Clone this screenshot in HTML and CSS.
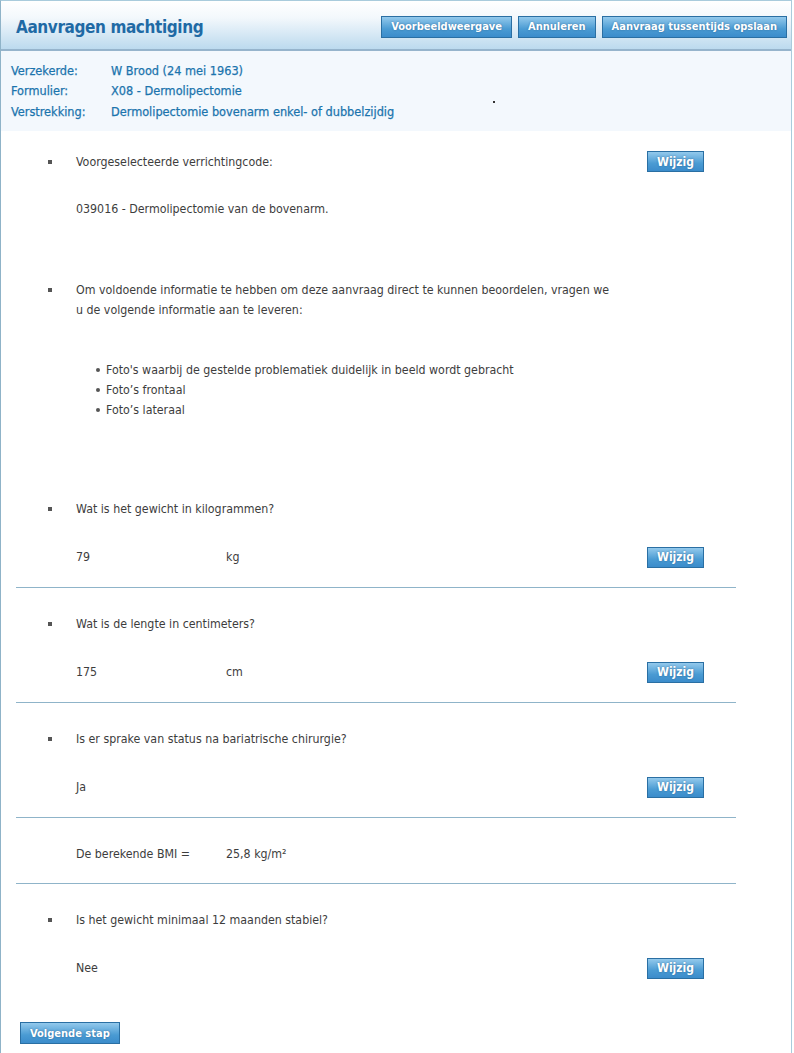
FILE: index.html
```html
<!DOCTYPE html>
<html lang="nl">
<head>
<meta charset="UTF-8">
<title>Aanvragen machtiging</title>
<link rel="stylesheet" href="styles.css">
</head>
<body>

<div class="page">

    <div class="header">
        <h1>Aanvragen machtiging</h1>
        <div class="actions">
            <button class="btn">Voorbeeldweergave</button>
            <button class="btn">Annuleren</button>
            <button class="btn">Aanvraag tussentijds opslaan</button>
        </div>
    </div>

    <div class="info">
        <div class="info-grid">
            <span>Verzekerde:</span><span>W Brood (24 mei 1963)</span>
            <span>Formulier:</span><span>X08 - Dermolipectomie</span>
            <span>Verstrekking:</span><span>Dermolipectomie bovenarm enkel- of dubbelzijdig</span>
        </div>
        <span class="dot"></span>
    </div>

    <div class="content">

        <div class="item first">
            <div class="row">
                <span class="sq"></span>
                <span class="text">Voorgeselecteerde verrichtingcode:</span>
                <button class="btn small">Wijzig</button>
            </div>
            <div class="answer">039016 - Dermolipectomie van de bovenarm.</div>
        </div>

        <div class="item note">
            <div class="row top">
                <span class="sq"></span>
                <span class="text">Om voldoende informatie te hebben om deze aanvraag direct te kunnen beoordelen, vragen we<br>u de volgende informatie aan te leveren:</span>
            </div>
            <ul class="bullets">
                <li>Foto's waarbij de gestelde problematiek duidelijk in beeld wordt gebracht</li>
                <li>Foto’s frontaal</li>
                <li>Foto’s lateraal</li>
            </ul>
        </div>

        <div class="item sep">
            <div class="row"><span class="sq"></span><span class="text">Wat is het gewicht in kilogrammen?</span></div>
            <div class="row answer-row">
                <span class="val">79</span><span class="unit">kg</span>
                <button class="btn small">Wijzig</button>
            </div>
        </div>

        <div class="item sep">
            <div class="row"><span class="sq"></span><span class="text">Wat is de lengte in centimeters?</span></div>
            <div class="row answer-row">
                <span class="val">175</span><span class="unit">cm</span>
                <button class="btn small">Wijzig</button>
            </div>
        </div>

        <div class="item sep">
            <div class="row"><span class="sq"></span><span class="text">Is er sprake van status na bariatrische chirurgie?</span></div>
            <div class="row answer-row">
                <span class="val">Ja</span>
                <button class="btn small">Wijzig</button>
            </div>
        </div>

        <div class="item sep bmi">
            <div class="row answer-row">
                <span class="val">De berekende BMI =</span><span class="unit">25,8 kg/m²</span>
            </div>
        </div>

        <div class="item last">
            <div class="row"><span class="sq"></span><span class="text">Is het gewicht minimaal 12 maanden stabiel?</span></div>
            <div class="row answer-row">
                <span class="val">Nee</span>
                <button class="btn small">Wijzig</button>
            </div>
        </div>

    </div>

    <div class="footer">
        <button class="btn">Volgende stap</button>
    </div>

</div>

</body>
</html>
```

FILE: styles.css
```css
:root{
    --text:#3d3d3d;
    --blue:#1b74ad;
    --title:#1f6aa5;
    --line:#8fb4c9;
    --frame:#a9cbdc;
}

*{
    box-sizing:border-box;
}

body{
    margin:0;
    background:#fff;
    font-family:"DejaVu Sans Condensed", "DejaVu Sans", sans-serif;
    font-size:12.3px;
    color:var(--text);
}

/* frame */
.page{
    width:792px;
    min-height:1053px;
    border:1px solid var(--frame);
    border-bottom:none;
    border-left-color:#8fb3c8;
}

/* header */
.header{
    height:50px;
    display:flex;
    align-items:center;
    justify-content:space-between;
    padding:0 4px 0 15px;
    background:linear-gradient(#ffffff 0%, #f3f8fc 35%, #bcdaee 100%);
    border-bottom:2px solid #96b4cc;
}

.header h1{
    margin:0;
    padding-top:4px;
    font-size:17px;
    letter-spacing:-0.4px;
    font-weight:bold;
    color:var(--title);
}

.actions{
    display:flex;
    gap:6px;
    margin-top:3px;
}

/* buttons */
.btn{
    height:22px;
    padding:0 9px;
    border:1px solid #2a6fa3;
    background:linear-gradient(#93c9ec, #4a9bd3 60%, #3b8ccb);
    color:#fff;
    font-family:inherit;
    font-size:11px;
    font-weight:bold;
    text-shadow:0 0 2px rgba(0,40,80,.45);
    cursor:pointer;
}

.btn.small{
    width:57px;
    height:21px;
    padding:0;
    margin-left:auto;
    font-size:12px;
}

/* info block */
.info{
    display:flex;
    background:#f3f8fd;
    padding:10px 10px 9px;
    height:80px;
}

.info-grid{
    display:grid;
    grid-template-columns:100px auto;
    width:480px;
    line-height:20px;
    color:var(--blue);
    font-size:12.6px;
    -webkit-text-stroke:0.25px var(--blue);
}

.dot{
    width:2px;
    height:2px;
    background:#333;
    margin:40px 0 0 2px;
}

/* content */
.content{
    margin:0 55px 0 15px;
    padding-top:20px;
}

.row{
    display:flex;
    align-items:center;
    padding-left:32px;
    padding-right:32px;
    min-height:20px;
}

.row.top{
    align-items:flex-start;
}

.row.top .sq{
    margin-top:8px;
}

.sq{
    width:4px;
    height:4px;
    background:#555;
    margin-right:24px;
    flex:none;
}

.text{
    line-height:20px;
}

.answer{
    padding-left:60px;
    line-height:20px;
    margin-top:27px;
}

.answer-row{
    padding-left:60px;
    margin-top:27px;
    min-height:22px;
}

.val{
    width:150px;
}

.item.note{
    margin-top:61px;
}

.bullets{
    margin:40px 0 0;
    padding-left:90px;
    line-height:20px;
}

.bullets li{
    list-style:none;
    position:relative;
}

.bullets li::before{
    content:"";
    position:absolute;
    left:-10px;
    top:8px;
    width:4px;
    height:4px;
    border-radius:50%;
    background:#555;
}

.item.sep{
    padding-bottom:19px;
    border-bottom:1px solid var(--line);
}

.item.sep + .item{
    padding-top:26px;
}

.item.note + .item.sep{
    margin-top:79px;
}

.item.bmi .answer-row{
    margin-top:0;
    min-height:20px;
}

/* footer */
.footer{
    padding:43px 0 0 19px;
}
```
